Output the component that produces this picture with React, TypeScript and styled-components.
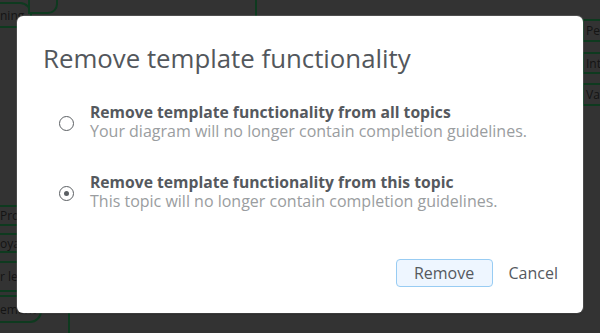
import React, { useState } from 'react';
import styled, { createGlobalStyle } from 'styled-components';

const GlobalStyle = createGlobalStyle`
  html, body {
    margin: 0;
    padding: 0;
    width: 600px;
    height: 333px;
    overflow: hidden;
    background: #333333;
  }
  * { box-sizing: border-box; }
`;

// mind map peeking out behind the modal overlay
const canvasNodes = [
  { x: -4, y: 2, w: 36, h: 26, label: 'ning', r: '0 12px 12px 0' },
  { x: 28, y: -14, w: 30, h: 28, label: '', r: '0 0 10px 0' },
  { x: -4, y: 205, w: 50, h: 21, label: 'Prol', r: '0' },
  { x: -4, y: 233, w: 50, h: 20, label: 'oya', r: '0' },
  { x: -4, y: 261, w: 50, h: 31, label: 'r le', r: '0' },
  { x: -4, y: 295, w: 46, h: 28, label: 'ement', r: '0 0 12px 0' },
  { x: 582, y: 19, w: 40, h: 23, label: 'Pers', r: '0' },
  { x: 582, y: 52, w: 40, h: 22, label: 'Inte', r: '0' },
  { x: 582, y: 83, w: 40, h: 23, label: 'Valu', r: '0' },
];

const options = [
  {
    id: 'all',
    title: 'Remove template functionality from all topics',
    hint: 'Your diagram will no longer contain completion guidelines.',
  },
  {
    id: 'this',
    title: 'Remove template functionality from this topic',
    hint: 'This topic will no longer contain completion guidelines.',
  },
];

export default function App() {
  const [choice, setChoice] = useState('this');

  return (
    <Stage>
      <GlobalStyle />
      <Canvas>
        {canvasNodes.map((n, i) => (
          <MapNode
            key={i}
            style={{ left: n.x, top: n.y, width: n.w, height: n.h, borderRadius: n.r }}
          >
            {n.label}
          </MapNode>
        ))}
        <Connector style={{ left: 255, top: 0, height: 18 }} />
        <Connector style={{ left: 68, top: 300, height: 40 }} />
      </Canvas>

      <Dialog>
        <Title>Remove template functionality</Title>
        <OptionList>
          {options.map((o) => (
            <Option key={o.id} onClick={() => setChoice(o.id)}>
              <Radio $checked={choice === o.id} />
              <OptionText>
                <OptionTitle>{o.title}</OptionTitle>
                <OptionHint>{o.hint}</OptionHint>
              </OptionText>
            </Option>
          ))}
        </OptionList>
        <Footer>
          <PrimaryButton>Remove</PrimaryButton>
          <LinkButton>Cancel</LinkButton>
        </Footer>
      </Dialog>
    </Stage>
  );
}

const Stage = styled.div`
  position: relative;
  width: 600px;
  height: 333px;
  padding: 16px 17px 20px;
  font-family: 'Open Sans', 'Noto Sans', sans-serif;
`;

const Canvas = styled.div`
  position: absolute;
  inset: 0;
  overflow: hidden;
`;

const MapNode = styled.div`
  position: absolute;
  border: 2px solid #0e3a1f;
  background: #333333;
  color: #141414;
  font-size: 12px;
  display: flex;
  align-items: center;
  padding-left: 2px;
  white-space: nowrap;
  overflow: hidden;
`;

const Connector = styled.div`
  position: absolute;
  width: 2px;
  background: #0e3a1f;
`;

const Dialog = styled.div`
  position: relative;
  width: 566px;
  height: 297px;
  background: #ffffff;
  border-radius: 6px;
  box-shadow: 0 1px 2px rgba(0, 0, 0, 0.35), 0 0 0 1px rgba(255, 255, 255, 0.15);
  padding: 24px 25px 0 26px;
  display: flex;
  flex-direction: column;
`;

const Title = styled.h1`
  margin: 0;
  font-size: 25.8px;
  font-weight: 400;
  line-height: 36px;
  color: #53575c;
`;

const OptionList = styled.div`
  display: flex;
  flex-direction: column;
  gap: 32px;
  margin-top: 27px;
  padding-left: 16px;
`;

const Option = styled.label`
  display: flex;
  align-items: center;
  gap: 16px;
  cursor: pointer;
`;

const Radio = styled.span<{ $checked: boolean }>`
  width: 15px;
  height: 15px;
  flex: none;
  border-radius: 50%;
  border: 1.5px solid #5b5f63;
  display: flex;
  align-items: center;
  justify-content: center;
  margin-top: 3px;

  &::after {
    content: '';
    width: 5px;
    height: 5px;
    border-radius: 50%;
    background: #5b5f63;
    display: ${(p) => (p.$checked ? 'block' : 'none')};
  }
`;

const OptionText = styled.div`
  display: flex;
  flex-direction: column;
`;

const OptionTitle = styled.span`
  font-size: 15.7px;
  font-weight: 700;
  line-height: 19px;
  color: #55595e;
`;

const OptionHint = styled.span`
  font-size: 16px;
  font-weight: 400;
  line-height: 19px;
  color: #9a9da0;
`;

const Footer = styled.div`
  display: flex;
  justify-content: flex-end;
  align-items: center;
  gap: 16px;
  margin-top: auto;
  margin-bottom: 26px;
`;

const PrimaryButton = styled.button`
  font-family: inherit;
  font-size: 16px;
  color: #55595e;
  background: #eef6ff;
  border: 1px solid #98ccf3;
  border-radius: 4px;
  width: 97px;
  height: 28px;
  padding: 0;
  cursor: pointer;
`;

const LinkButton = styled.button`
  font-family: inherit;
  font-size: 16px;
  color: #55595e;
  background: none;
  border: none;
  padding: 0;
  cursor: pointer;
`;
